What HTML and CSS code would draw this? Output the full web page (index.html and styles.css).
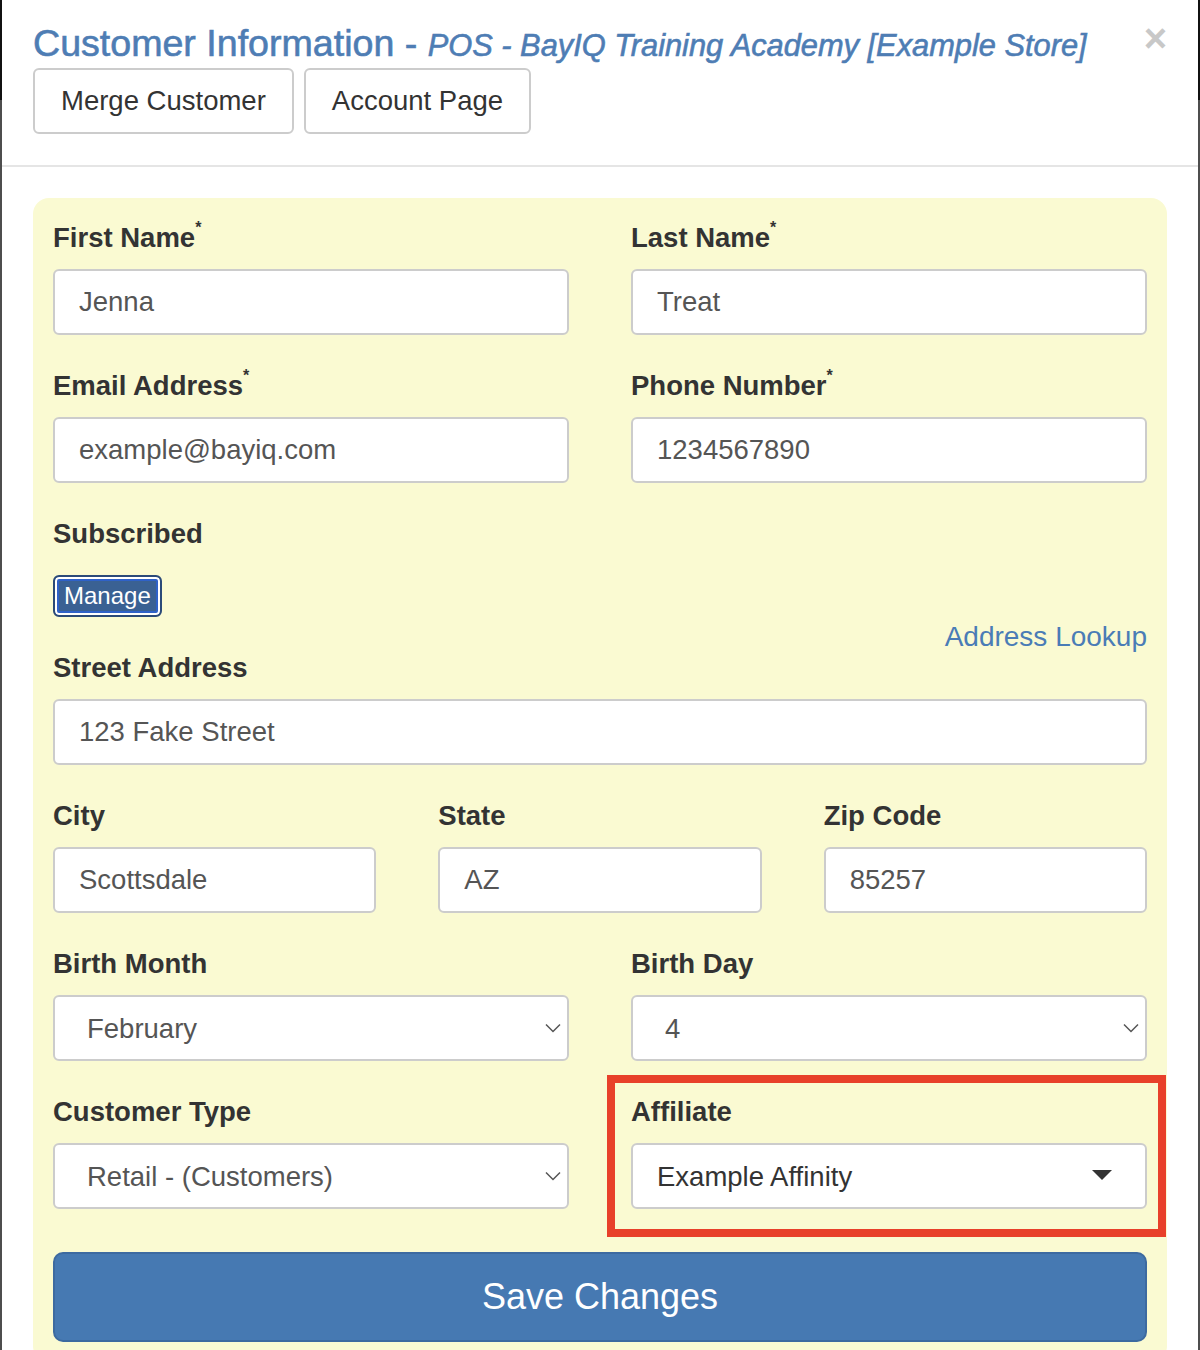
FILE: index.html
```html
<!DOCTYPE html>
<html lang="en">

<head>
    <meta charset="UTF-8">
    <meta name="viewport" content="width=device-width, initial-scale=1.0">
    <title>Customer Information</title>
    <link rel="stylesheet" href="styles.css">
</head>

<body>
    <div class="modal">
        <div class="modal-header">
            <div class="title-row">
                <h4 class="modal-title">
                    Customer Information - <span class="store-name">POS - BayIQ Training Academy [Example Store]</span>
                </h4>
                <button class="close" type="button">&times;</button>
            </div>
            <div class="header-actions">
                <button class="btn btn-default" type="button">Merge Customer</button>
                <button class="btn btn-default" type="button">Account Page</button>
            </div>
        </div>

        <div class="modal-body">
            <form class="customer-form">
                <div class="row two-col">
                    <div class="form-group">
                        <label>First Name<sup>*</sup></label>
                        <input class="form-control" type="text" value="Jenna">
                    </div>
                    <div class="form-group">
                        <label>Last Name<sup>*</sup></label>
                        <input class="form-control" type="text" value="Treat">
                    </div>
                </div>

                <div class="row two-col">
                    <div class="form-group">
                        <label>Email Address<sup>*</sup></label>
                        <input class="form-control" type="text" value="example@bayiq.com">
                    </div>
                    <div class="form-group">
                        <label>Phone Number<sup>*</sup></label>
                        <input class="form-control" type="text" value="1234567890">
                    </div>
                </div>

                <div class="subscribed">
                    <label>Subscribed</label>
                    <button class="btn-manage" type="button">Manage</button>
                </div>

                <div class="address-lookup">
                    <a href="#">Address Lookup</a>
                </div>

                <div class="form-group">
                    <label>Street Address</label>
                    <input class="form-control" type="text" value="123 Fake Street">
                </div>

                <div class="row three-col">
                    <div class="form-group">
                        <label>City</label>
                        <input class="form-control" type="text" value="Scottsdale">
                    </div>
                    <div class="form-group">
                        <label>State</label>
                        <input class="form-control" type="text" value="AZ">
                    </div>
                    <div class="form-group">
                        <label>Zip Code</label>
                        <input class="form-control" type="text" value="85257">
                    </div>
                </div>

                <div class="row two-col">
                    <div class="form-group">
                        <label>Birth Month</label>
                        <div class="select-wrap">
                            <select class="form-control">
                                <option>February</option>
                            </select>
                            <svg class="chevron" width="16" height="10" viewBox="0 0 16 10">
                                <polyline points="1,1.5 8,8.5 15,1.5" fill="none" stroke="#555" stroke-width="1.5"/>
                            </svg>
                        </div>
                    </div>
                    <div class="form-group">
                        <label>Birth Day</label>
                        <div class="select-wrap">
                            <select class="form-control">
                                <option>4</option>
                            </select>
                            <svg class="chevron" width="16" height="10" viewBox="0 0 16 10">
                                <polyline points="1,1.5 8,8.5 15,1.5" fill="none" stroke="#555" stroke-width="1.5"/>
                            </svg>
                        </div>
                    </div>
                </div>

                <div class="row two-col">
                    <div class="form-group">
                        <label>Customer Type</label>
                        <div class="select-wrap">
                            <select class="form-control">
                                <option>Retail - (Customers)</option>
                            </select>
                            <svg class="chevron" width="16" height="10" viewBox="0 0 16 10">
                                <polyline points="1,1.5 8,8.5 15,1.5" fill="none" stroke="#555" stroke-width="1.5"/>
                            </svg>
                        </div>
                    </div>
                    <div class="form-group highlighted">
                        <label>Affiliate</label>
                        <div class="select-wrap">
                            <select class="form-control select-affiliate">
                                <option>Example Affinity</option>
                            </select>
                            <svg class="caret" width="20" height="10" viewBox="0 0 20 10">
                                <polygon points="0,0 20,0 10,10" fill="#333"/>
                            </svg>
                        </div>
                    </div>
                </div>

                <button class="btn-save" type="button">Save Changes</button>
            </form>
        </div>
    </div>
</body>

</html>
```

FILE: styles.css
```css
* {
    box-sizing: border-box;
    font-family: "Liberation Sans", Arial, Helvetica, sans-serif;
}

html,
body {
    margin: 0;
    padding: 0;
    height: 100%;
    overflow: hidden;
}

body {
    background: linear-gradient(#111111 0, #111111 100px, #4d4d4d 100px);
}

.modal {
    margin: 0 2px;
    min-height: 100%;
    background-color: #ffffff;
}

/*HEADER*/

.modal-header {
    padding: 23px 31px 31px;
    border-bottom: 2px solid #e5e5e5;
}

.title-row {
    display: flex;
    align-items: flex-start;
    height: 41px;
}

.modal-title {
    flex: 1;
    margin: 0;
    font-size: 37.6px;
    font-weight: 400;
    line-height: 41px;
    color: #4e7db4;
    -webkit-text-stroke: 0.6px #4e7db4;
    white-space: nowrap;
}

.store-name {
    font-size: 30.8px;
    font-style: italic;
}

.close {
    border: 0;
    background: none;
    padding: 0;
    margin-top: -5px;
    font-size: 40px;
    font-weight: 700;
    line-height: 1;
    color: #c8c8c8;
}

.header-actions {
    display: flex;
    gap: 10px;
    margin-top: 4px;
}

.btn {
    height: 66px;
    padding: 0 26px;
    font-size: 27.5px;
    color: #333333;
    background-color: #ffffff;
    border: 2px solid #cccccc;
    border-radius: 6px;
}

/*BODY*/

.modal-body {
    padding: 31px 31px 0;
}

.customer-form {
    background-color: #fafad2;
    border-radius: 16px;
    padding: 24px 20px 20px;
}

.row {
    display: grid;
    column-gap: 62px;
}

.two-col {
    grid-template-columns: 1fr 1fr;
}

.three-col {
    grid-template-columns: 1fr 1fr 1fr;
}

.form-group {
    margin-bottom: 35px;
}

label {
    display: block;
    margin-bottom: 15px;
    font-size: 27.5px;
    line-height: 32px;
    font-weight: 700;
    color: #333333;
}

label sup {
    font-size: 16px;
    line-height: 0;
    vertical-align: 14px;
}

.form-control {
    display: block;
    width: 100%;
    height: 66px;
    padding: 0 24px;
    font-size: 27.5px;
    color: #555555;
    background-color: #ffffff;
    border: 2px solid #cccccc;
    border-radius: 6px;
    outline: none;
}

select.form-control {
    appearance: none;
    -webkit-appearance: none;
    padding-left: 32px;
}

select.select-affiliate {
    padding-left: 24px;
    color: #333333;
}

.select-wrap {
    position: relative;
}

.chevron {
    position: absolute;
    right: 8px;
    top: 28px;
}

.caret {
    position: absolute;
    right: 35px;
    top: 27px;
}

/*SUBSCRIBED*/

.subscribed label {
    margin-bottom: 25px;
}

.btn-manage {
    display: block;
    height: 42px;
    padding: 0 9px;
    font-size: 24px;
    color: #ffffff;
    background-color: #3a6193;
    border: 2px solid #2b4a78;
    border-radius: 6px;
    box-shadow: inset 0 0 0 2px #ffffff, inset 0 0 0 4px #2f62c8;
}

.address-lookup {
    margin-top: 5px;
    text-align: right;
    font-size: 28px;
    line-height: 30px;
}

.address-lookup a {
    color: #4a7cb6;
    text-decoration: none;
}

/*AFFILIATE HIGHLIGHT*/

.highlighted {
    position: relative;
}

.highlighted::after {
    content: "";
    position: absolute;
    top: -21px;
    left: -24px;
    right: -19px;
    bottom: -28px;
    border: 8px solid #e8402a;
    pointer-events: none;
}

/*SAVE*/

.btn-save {
    display: block;
    width: 100%;
    height: 90px;
    margin-top: 8px;
    font-size: 36px;
    color: #ffffff;
    background-color: #4679b2;
    border: 2px solid #3d6aa0;
    border-radius: 10px;
}
```
